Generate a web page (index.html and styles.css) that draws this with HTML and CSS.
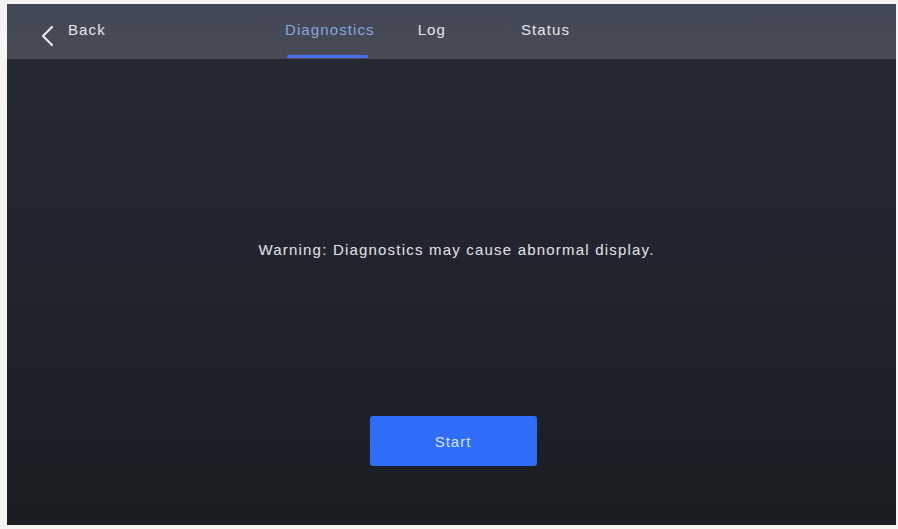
FILE: index.html
```html
<!DOCTYPE html>
<html>
<head>
<meta charset="utf-8">
<link rel="stylesheet" href="styles.css">
</head>
<body>
<div class="screen">
  <header class="topbar">
    <div class="back">
      <svg class="chev" width="14" height="22" viewBox="0 0 14 22"><path d="M12 2 L3 11 L12 20" fill="none" stroke="#e6e8ec" stroke-width="2.2" stroke-linecap="round" stroke-linejoin="round"/></svg>
      <span class="back-label">Back</span>
    </div>
    <nav class="tabs">
      <div class="tab active">Diagnostics</div>
      <div class="tab">Log</div>
      <div class="tab">Status</div>
    </nav>
  </header>
  <main class="content">
    <p class="warning">Warning: Diagnostics may cause abnormal display.</p>
    <button class="start">Start</button>
  </main>
</div>
</body>
</html>
```
FILE: styles.css
```css
html, body {
  margin: 0;
  padding: 0;
  background: #f4f5f3;
  width: 898px;
  height: 529px;
  overflow: hidden;
}
body {
  padding: 4px 2px 4px 7px;
  box-sizing: border-box;
  font-family: "Liberation Sans", Arial, sans-serif;
}
.screen {
  width: 889px;
  height: 521px;
  display: flex;
  flex-direction: column;
  background: linear-gradient(180deg, #262a36 0%, #22252f 45%, #1a1d21 100%);
}
.topbar {
  height: 55px;
  flex: none;
  background: linear-gradient(180deg, #434856 0%, #484b56 100%);
  display: flex;
  align-items: stretch;
  position: relative;
}
.back {
  display: flex;
  align-items: flex-start;
  padding-left: 33px;
  gap: 14px;
  width: 245px;
  box-sizing: border-box;
}
.chev { display: block; margin-top: 21px; }
.back-label {
  color: #e4e6ea;
  font-size: 15px;
  letter-spacing: 1.1px;
  margin-top: 17px;
}
.tabs {
  display: flex;
  align-items: stretch;
  margin-left: 33px;
}
.tab {
  color: #e4e6ea;
  font-size: 15px;
  letter-spacing: 1.1px;
  padding: 17px 0 0;
  position: relative;
  box-sizing: border-box;
  margin-right: 43px;
}
.tab:nth-child(2) { margin-right: 75px; }
.tab.active {
  color: #86a7dc;
}
.tab.active::after {
  content: "";
  position: absolute;
  left: 2px;
  right: 7px;
  bottom: 1px;
  height: 3px;
  border-radius: 2px;
  background: #4a6ef0;
}
.content {
  flex: 1;
  display: flex;
  flex-direction: column;
  align-items: center;
}
.warning {
  margin: 182px 0 0;
  color: #e2e3e6;
  font-size: 15px;
  letter-spacing: 1.2px;
  line-height: 18px;
  margin-left: 10px;
}
.start {
  margin-top: 157px;
  width: 167px;
  height: 50px;
  border: none;
  border-radius: 3px;
  background: #2f6cf7;
  color: #d7e2fb;
  font-family: "Liberation Sans", Arial, sans-serif;
  font-size: 15px;
  letter-spacing: 1px;
  margin-left: 3px;
  padding: 0;
}
```
